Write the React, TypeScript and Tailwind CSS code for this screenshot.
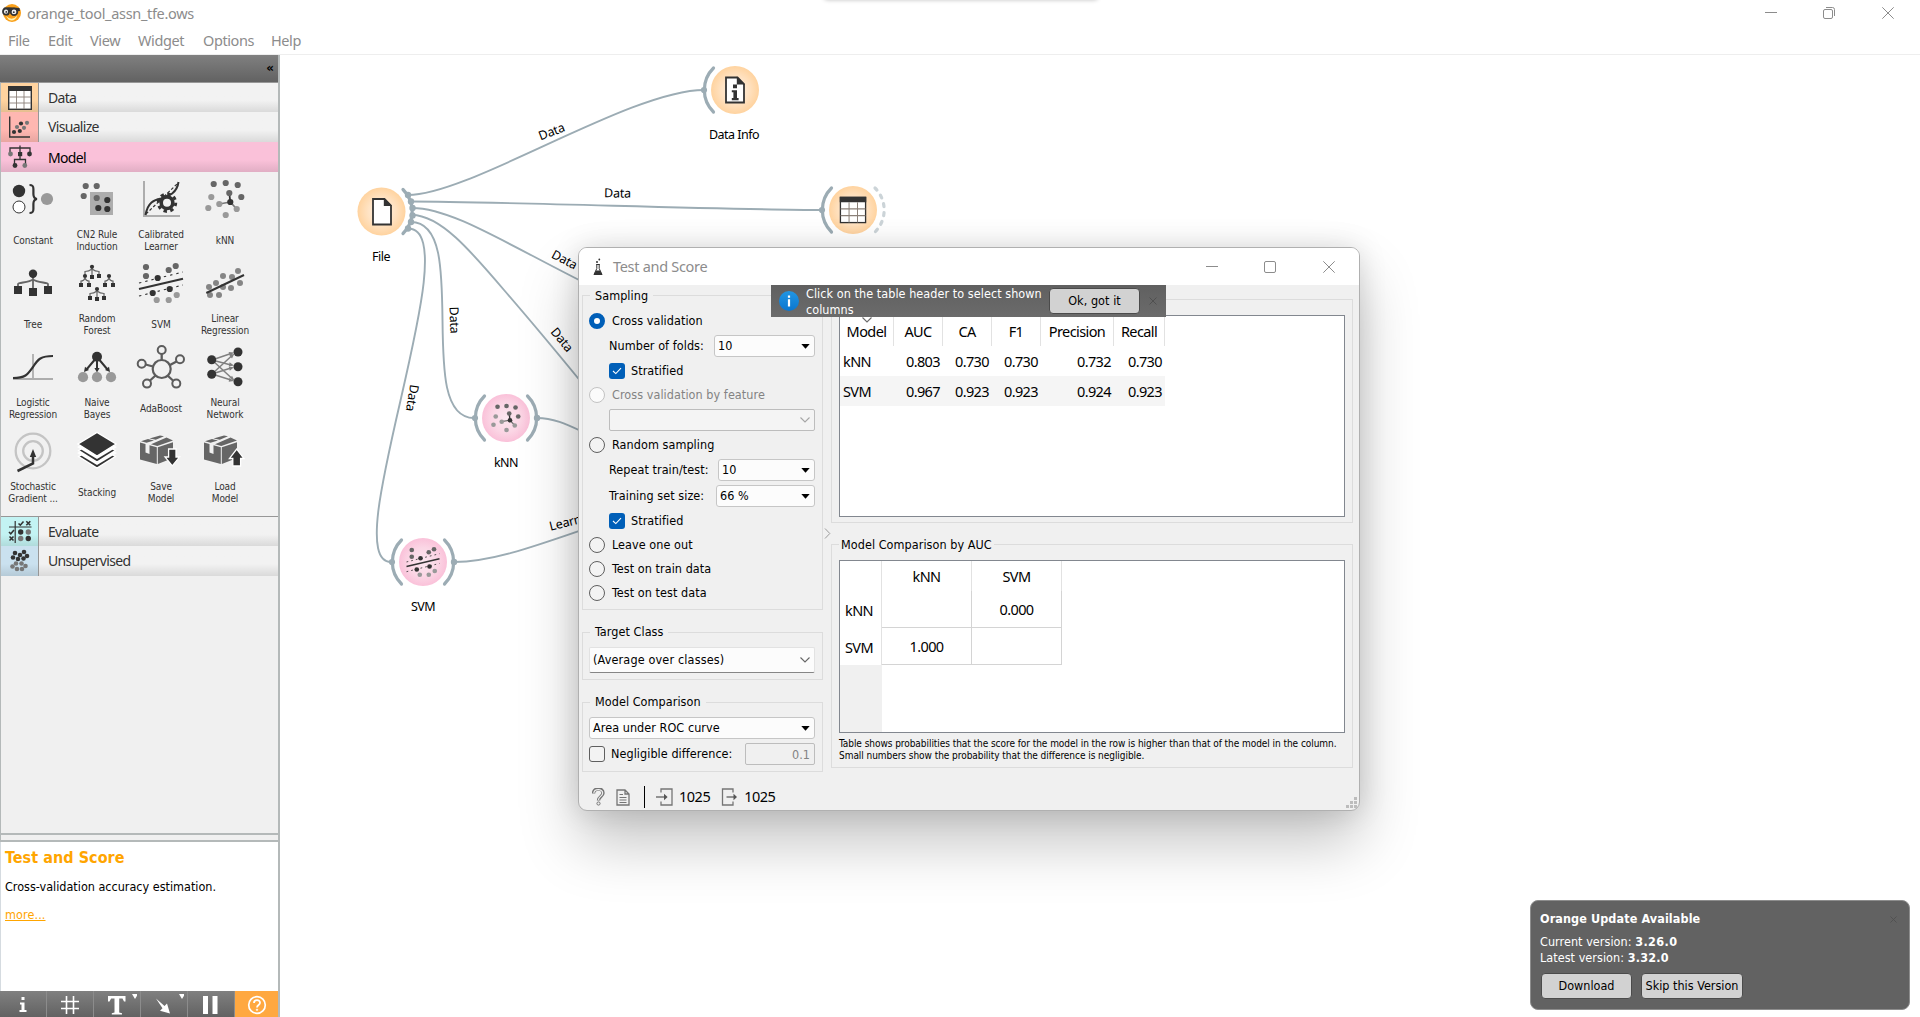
import React from "react";

const SEGOE = "[font-family:'Noto_Sans',sans-serif]";
const TAHOMA = "[font-family:'DejaVu_Sans_Condensed','DejaVu_Sans',sans-serif] font-stretch-condensed";

type Dot = [number, number, string];

const Dots = ({ items, r = 3.1 }: { items: Dot[]; r?: number }) => (
  <>
    {items.map(([x, y, c], i) => (
      <circle key={i} cx={x} cy={y} r={r} fill={c} />
    ))}
  </>
);

const K = "#333333";
const M = "#666666";
const L = "#999999";

const Square = ({ x, y, s }: { x: number; y: number; s: number }) => (
  <rect x={x - s / 2} y={y - s / 2} width={s} height={s} fill={K} />
);

const ConstantArt = () => (
  <g>
    <circle cx="18" cy="19" r="6.2" fill={K} />
    <circle cx="18" cy="35" r="6" fill="#fff" stroke={K} strokeWidth="1" />
    <path d="M28.5 13 C32 13 32.4 14.5 32.4 17 V22 C32.4 25 33 26.6 36 27 C33 27.4 32.4 29 32.4 32 V37 C32.4 39.5 32 41 28.5 41" fill="none" stroke={K} strokeWidth="2.2" />
    <circle cx="46" cy="27" r="6.1" fill={L} />
  </g>
);

const CN2Art = () => (
  <g>
    <rect x="25" y="20" width="23" height="23" fill="#adadad" />
    <Dots items={[[20.7, 14, M], [31.7, 14, M], [18.7, 24, M], [31.7, 26, M], [42.3, 28, K], [33.3, 36, K], [42.3, 37, K]]} />
  </g>
);

const CalibratedArt = () => (
  <g fill="none">
    <path d="M15 9 V44 H51" stroke="#adadad" strokeWidth="2" />
    <path d="M17 42 L48 12" stroke={K} strokeWidth="1.2" strokeDasharray="3 2" />
    <path d="M16.5 43 C19 29 26 28 32 26.5 C40 24 48 21 49.5 10" stroke={K} strokeWidth="2" />
    <circle cx="38" cy="30.7" r="8.7" stroke={K} strokeWidth="3" strokeDasharray="3.4 3.43" />
    <circle cx="38" cy="30.7" r="5.8" fill="#f1f1f1" stroke={K} strokeWidth="3.6" />
  </g>
);

const KnnArt = () => (
  <g>
    <path d="M37.3 30 L26.3 32 M37.3 30 L43.7 37" stroke="#777" strokeWidth="1.7" />
    <path d="M37.3 30 L36.3 21" stroke={K} strokeWidth="1.8" />
    <Dots items={[[20.7, 12, M], [32.7, 11, M], [44.7, 13, M], [36.3, 21, M], [48.3, 25, M], [18.3, 25, L], [15.3, 36, L], [26.3, 32, L], [43.7, 37, L], [32.7, 43, L], [37.3, 30, K]]} />
  </g>
);

const TreeArt = () => (
  <g>
    <path d="M17 31 V28 C17 26.5 28 26.5 32 23.5 C36 26.5 47 26.5 47 28 V31 M32 20 V34" fill="none" stroke={M} strokeWidth="1.8" />
    <circle cx="32" cy="17.8" r="4.2" fill={K} />
    <Square x={17} y={34} s={8} />
    <Square x={32} y={36} s={8} />
    <Square x={47} y={34} s={8} />
  </g>
);

const ForestArt = () => (
  <g>
    <path d="M20 19 V15.5 Q24 15.5 27 13 Q30 15.5 34 15.5 V18 M27 11 V20 M16 28 V25 Q19 25 20 22 Q21 25 24 25 V28 M40 28 V25 Q43 25 44 22 Q45 25 48 25 V28 M25 41 V37.5 Q29 37.5 32 35 Q35 37.5 39 37.5 V41 M32 34 V42" fill="none" stroke={M} strokeWidth="1.2" />
    <Dots r={2.1} items={[[27, 10.8, K], [20, 20, K], [44, 20, K], [32, 33, K]]} />
    {([[27, 21], [34, 20], [16, 29], [24, 29], [40, 29], [48, 29], [25, 42], [32, 43], [39, 42]] as [number, number][]).map(([x, y]) => (
      <Square key={`${x}-${y}`} x={x} y={y} s={4} />
    ))}
  </g>
);

const SvmArt = () => (
  <g>
    <path d="M10 33 L54 22.7" stroke={K} strokeWidth="2" />
    <path d="M10 27 L54 16 M10 40 L54 29" stroke={K} strokeWidth="1.1" strokeDasharray="2.4 4" />
    <Dots items={[[17, 11, M], [17, 20, M], [39.7, 14, M], [46.7, 10, M], [28.7, 22, K], [23.7, 37, K], [40.7, 33, K], [27.7, 44, L], [39.7, 44, L], [47.7, 39, L]]} />
  </g>
);

const LinearArt = () => (
  <g>
    <Dots r={3} items={[[16, 31, "#858585"], [23, 27, "#858585"], [30, 20, "#858585"], [39, 21, "#858585"], [45, 15, "#858585"], [17, 39, "#858585"], [26, 39, "#858585"], [30, 31, "#858585"], [38, 32, "#858585"], [47, 27, "#858585"]]} />
    <path d="M13.3 37 L51 19" stroke={K} strokeWidth="2" />
  </g>
);

const LogisticArt = () => (
  <g fill="none">
    <path d="M32 14 V39 M12 39 H52" stroke="#adadad" strokeWidth="1.8" />
    <path d="M12 38 C25 38 27 34 32 27 C37 19 40 16 52 16" stroke={K} strokeWidth="2.2" />
  </g>
);

const BayesArt = () => (
  <g>
    <path d="M32 17 L21.5 29.5 M32 17 V29 M32 17 L42.5 29.5" stroke={K} strokeWidth="2" />
    <path d="M19 32 L20 26.8 L24 30 Z M32 32.5 L29.4 28 H34.6 Z M45 32 L44 26.8 L40 30 Z" fill={K} />
    <circle cx="32" cy="16.7" r="5" fill={K} />
    <Dots r={5.1} items={[[18, 37.2, L], [32, 37.2, L], [46, 37.2, L]]} />
  </g>
);

const AdaArt = () => (
  <g fill="none" stroke="#5c5c5c">
    <circle cx="32.7" cy="29" r="9" strokeWidth="2.2" />
    <path d="M32.7 20 V14 M41 25 L47.5 21.5 M24 26.5 L16.5 24.5 M26.5 35.5 L20.5 41 M38.5 35.5 L44.5 41" strokeWidth="2.3" />
    <g strokeWidth="2">
      <circle cx="32.7" cy="10" r="4" />
      <circle cx="51" cy="19.3" r="4" />
      <circle cx="12.7" cy="23.7" r="4" />
      <circle cx="18" cy="43.6" r="4" />
      <circle cx="47.3" cy="43.6" r="4" />
    </g>
  </g>
);

const NeuralArt = () => (
  <g>
    <path d="M19 20 L38 13.5 M19 20 L38 25 M19 20 L38.5 38 M19 34 L38.5 16 M19 34 L38 28 M19 34 L38 40" stroke="#808080" strokeWidth="1.5" />
    <path d="M41 12.6 L35.6 12 L37 16 Z M41 25.6 L36.6 22.3 L35.8 26.4 Z M41.5 40.5 L36.7 38.8 L39 35.8 Z M41.5 13.5 L36.3 15.4 L39 18.6 Z M41 27.3 L35.8 26.8 L36.8 30.7 Z M41 41 L36.5 37.6 L35.7 41.7 Z" fill="#808080" />
    <Dots r={4.5} items={[[18.7, 19.7, K], [18.7, 34.3, K], [45, 12, K], [45, 26.7, K], [45, 41.7, K]]} />
  </g>
);

const SgdArt = () => (
  <g fill="none">
    <circle cx="32" cy="27" r="17.3" stroke="#c4c4c4" strokeWidth="2.3" />
    <circle cx="32" cy="27" r="9.8" stroke="#c4c4c4" strokeWidth="2.3" />
    <path d="M16.5 47 L32 39.5 V31" stroke={K} strokeWidth="2.5" />
    <path d="M32 25 L35.2 33 H28.8 Z" fill={K} />
  </g>
);

const StackArt = () => (
  <g stroke="#fff" strokeWidth="1.4">
    <path d="M32 21.5 L50.3 32.5 L32 44.2 L13.7 32.5 Z" fill={K} />
    <path d="M32 18 L52 29 L32 41 L12 29 Z" fill="#fff" stroke="none" />
    <path d="M32 15.5 L50.3 26.5 L32 38.2 L13.7 26.5 Z" fill={K} />
    <path d="M32 12 L52 23 L32 35 L12 23 Z" fill="#fff" stroke="none" />
    <path d="M32 8.3 L51 20 L32 32 L13 20 Z" fill={K} />
  </g>
);

const BoxArt = () => (
  <g fill={M}>
    <path d="M11 18.5 L16.5 20 V28.5 L20.5 30 V21.3 L27.8 23.3 V40 L11 35.5 Z" />
    <path d="M28.8 23.3 L44 18.3 V34 L28.8 40 Z" />
    <path d="M12 17.2 L19 14.9 L25 16.4 L17.5 18.8 Z M20.5 14.4 L31 11.4 L35 12.3 L26.8 15.8 Z M22 20.2 L37.5 13.6 L44 16.4 L28.3 22 Z" />
  </g>
);

const SaveArt = () => (
  <g>
    <BoxArt />
    <path d="M39.6 25 H47 V33 H50.6 L43.3 41.8 L36 33 H39.6 Z" fill={K} stroke="#fff" strokeWidth="1.3" />
  </g>
);

const LoadArt = () => (
  <g>
    <BoxArt />
    <path d="M39.8 42 H47.6 V34.5 H51 L43.7 25 L36.4 34.5 H39.8 Z" fill={K} stroke="#fff" strokeWidth="1.3" />
  </g>
);

const widgets: { label: string[]; art: React.ReactNode }[] = [
  { label: ["Constant"], art: <ConstantArt /> },
  { label: ["CN2 Rule", "Induction"], art: <CN2Art /> },
  { label: ["Calibrated", "Learner"], art: <CalibratedArt /> },
  { label: ["kNN"], art: <KnnArt /> },
  { label: ["Tree"], art: <TreeArt /> },
  { label: ["Random", "Forest"], art: <ForestArt /> },
  { label: ["SVM"], art: <SvmArt /> },
  { label: ["Linear", "Regression"], art: <LinearArt /> },
  { label: ["Logistic", "Regression"], art: <LogisticArt /> },
  { label: ["Naive", "Bayes"], art: <BayesArt /> },
  { label: ["AdaBoost"], art: <AdaArt /> },
  { label: ["Neural", "Network"], art: <NeuralArt /> },
  { label: ["Stochastic", "Gradient ..."], art: <SgdArt /> },
  { label: ["Stacking"], art: <StackArt /> },
  { label: ["Save", "Model"], art: <SaveArt /> },
  { label: ["Load", "Model"], art: <LoadArt /> },
];

const TableArt = ({ size = 24 }: { size?: number }) => (
  <svg width={size} height={size} viewBox="0 0 24 24">
    <rect x="0.7" y="0.7" width="22.6" height="22.6" fill="#fff" stroke={K} strokeWidth="1.4" />
    <path d="M0 0 H24 V5 H0 Z" fill={K} />
    <path d="M8.5 5 V23 M16 5 V23 M1 11 H23 M1 17 H23" stroke="#8a8078" strokeWidth="0.9" />
  </svg>
);

const ScatterArt = () => (
  <svg width="24" height="24" viewBox="0 0 24 24">
    <path d="M1.7 1.5 V22 H22" fill="none" stroke={K} strokeWidth="1.4" />
    <Dots r={2.1} items={[[6, 17, K], [11.8, 16, K], [13, 8.5, K], [9, 12, "#777"], [16, 12.8, "#777"], [19, 7.8, "#777"]]} />
  </svg>
);

const ModelArt = () => (
  <svg width="24" height="24" viewBox="0 0 24 24">
    <path d="M2 8 V3 H22 V8 M12 0.5 V14 M6.5 19 V14.5 H17.5 V19" fill="none" stroke={K} strokeWidth="1.3" />
    <Dots r={2.4} items={[[2.5, 9, "#777"], [21.5, 9, K], [7, 20.5, K], [16.8, 20.5, "#777"]]} />
    <rect x="10" y="7" width="4.2" height="4.2" fill={K} />
  </svg>
);

const EvaluateArt = () => (
  <svg width="24" height="24" viewBox="0 0 24 24">
    <path d="M7.2 1 V23 M1 7 H23.5" stroke={K} strokeWidth="1.2" />
    <path d="M10.5 3.5 L12.3 5.2 L15.5 1.5 M1 12 L2.8 13.8 L6 10 M18.3 1.3 L22.3 5.3 M22.3 1.3 L18.3 5.3 M1.5 16.5 L5.5 20.5 M5.5 16.5 L1.5 20.5" fill="none" stroke={K} strokeWidth="1.6" />
    <Dots r={2.7} items={[[12.7, 12, K], [20.3, 12, "#777"], [12.7, 18.5, "#777"], [20.3, 18.5, K]]} />
  </svg>
);

const UnsupervisedArt = () => (
  <svg width="24" height="24" viewBox="0 0 24 24">
    <Dots r={2.3} items={[[7, 4, K], [12, 6, K], [16, 3, K], [5, 8.5, K], [10, 10, K], [15.5, 9.5, K], [19, 7, K], [8, 14.5, "#777"], [13.5, 14.5, "#777"], [4.5, 17.5, "#777"], [17.5, 17, "#777"], [9, 20, "#777"], [14, 20, "#777"]]} />
  </svg>
);

const Category = ({ name, art, tint, height }: { name: string; art: React.ReactNode; tint: string; height: string }) => (
  <div className={`flex bg-linear-to-b from-[#f2f2f2] from-60% to-[#dadada] ${height}`}>
    <div className={`flex w-[38px] items-center justify-center border-r border-[#979797] ${tint}`}>{art}</div>
    <span className={`pl-[9px] text-[14px] leading-[29px] tracking-[-0.68px] text-[#333] ${SEGOE}`}>{name}</span>
  </div>
);

const Sidebar = () => (
  <aside className="flex w-[280px] flex-none flex-col border-r-2 border-[#b4b9b9] bg-[#f0f0f0]">
    <div className="flex h-[27px] items-center justify-end bg-linear-to-b from-[#808080] to-[#626262] pr-[4px]">
      <span className="mb-[2px] text-[12px] leading-none font-bold text-black [font-family:'DejaVu_Sans',sans-serif]">«</span>
    </div>
    <div className="flex h-[434px] flex-none flex-col border-t border-l border-t-[#979797] border-l-[#b4b9b9] bg-[#f1f1f1]">
      <Category height="h-[29px]" name="Data" tint="bg-linear-to-b from-[#ffd39f] from-60% to-[#e6be90]" art={<TableArt />} />
      <Category height="h-[30px]" name="Visualize" tint="bg-linear-to-b from-[#ffb7b1] from-60% to-[#e8a6a1]" art={<ScatterArt />} />
      <div className="flex h-[30px] items-center bg-linear-to-b from-[#fac1d9] from-60% to-[#e1aec4]">
        <div className="flex w-[38px] justify-center"><ModelArt /></div>
        <span className={`pl-[9px] text-[14px] leading-[29px] tracking-[-0.68px] text-black ${SEGOE}`}>Model</span>
      </div>
      <div className="grid grid-cols-[repeat(4,64px)] grid-rows-[repeat(4,84px)]">
        {widgets.map((w, i) => (
          <div key={i} className="flex flex-col items-center">
            <svg width="64" height="56" viewBox="0 0 64 56">{w.art}</svg>
            <div className={`flex h-[26px] flex-col justify-center text-center text-[10px] leading-[12px] tracking-[-0.1px] text-[#333] ${TAHOMA}`}>
              {w.label.map((l) => (
                <span key={l} className="block whitespace-nowrap">{l}</span>
              ))}
            </div>
          </div>
        ))}
      </div>
    </div>
    <div className="flex flex-1 flex-col border-l border-[#b4b9b9]">
      <div className="border-t border-[#979797]">
        <Category height="h-[29px]" name="Evaluate" tint="bg-linear-to-b from-[#c3f3f3] from-60% to-[#b0dbdb]" art={<EvaluateArt />} />
        <Category height="h-[30px]" name="Unsupervised" tint="bg-linear-to-b from-[#cae1ef] from-60% to-[#b5cad7]" art={<UnsupervisedArt />} />
      </div>
    </div>
    <div className="h-[9px] flex-none border-y-2 border-l border-[#b4b9b9]" />
    <div className={`flex h-[149px] flex-none flex-col border-l border-[#d5dbe0] bg-white pl-[4px] text-[12.5px] ${TAHOMA}`}>
      <h2 className="mt-[6px] text-[16px] leading-[20px] font-bold tracking-[0.05px] text-[#ffa500]">Test and Score</h2>
      <p className="mt-[11px] leading-[16px] text-black">Cross-validation accuracy estimation.</p>
      <a className="mt-[12px] leading-[16px] tracking-[0.1px] text-[#ffa500] underline">more...</a>
    </div>
    <div className="flex h-[26px] flex-none bg-linear-to-b from-[#808080] to-[#626262] text-white">
      {[
        <svg key="i" width="8" height="16" viewBox="0 0 8 16"><path d="M2.5 0 H5.5 V3 H2.5 Z M1 5.5 H5.5 V13 H7.5 V15 H0.5 V13 H2.5 V7.5 H1 Z" fill="#fff" /></svg>,
        <svg key="g" width="18" height="18" viewBox="0 0 18 18"><path d="M5.5 0 V18 M12.5 0 V18 M0 5.5 H18 M0 12.5 H18" stroke="#fff" strokeWidth="1.6" /></svg>,
        <svg key="t" width="40" height="22" viewBox="0 0 40 22"><path d="M11 2 H28.5 V7.5 H27 L25.5 4.5 H22.2 V18.5 L25 19.3 V20.5 H14.8 V19.3 L17.5 18.5 V4.5 H14.1 L12.5 7.5 H11 Z M35 0 H41 L38 5 Z" fill="#fff" /></svg>,
        <svg key="a" width="40" height="22" viewBox="0 0 40 22"><path d="M12 4.5 L20.5 12 L23 9.5 L26 19.5 L16 16.7 L18.5 14.3 Z M35 0 H41 L38 5 Z" fill="#fff" /></svg>,
        <svg key="p" width="16" height="18" viewBox="0 0 16 18"><path d="M0 0 H5 V18 H0 Z M9.5 0 H14.5 V18 H9.5 Z" fill="#fff" /></svg>,
      ].map((g, i) => (
        <div key={i} className="flex w-[47px] items-center justify-center border-r border-[#8c8c8c] pt-px">{g}</div>
      ))}
      <div className="flex flex-1 items-center justify-center bg-[#ffa840] pt-px">
        <svg width="20" height="20" viewBox="0 0 20 20" fill="none" stroke="#fff">
          <circle cx="10" cy="10" r="8.3" strokeWidth="1.7" />
          <path d="M7 8 C7 4.2 13 4.2 13 7.8 C13 10 10 10 10 12.4" strokeWidth="1.8" />
          <circle cx="10" cy="14.8" r="0.8" fill="#fff" strokeWidth="0.6" />
        </svg>
      </div>
    </div>
  </aside>
);

const LINK = "#9cacb4";

const links = [
  "M408 195 C470 195 630 90 704 90",
  "M411 201.5 C500 201.5 730 210 822 210",
  "M412 208 C450 208 500 240 582 281.5",
  "M412 215 C440 215 470 250 504 290 C530 320 555 350 582 383",
  "M411 222 C472 222 413 418 474 418",
  "M408 228.5 C471 228 334 562 391 562",
  "M537 418 C553 418 566 424 582 431.5",
  "M454 562 C490 562 530 548 582 530",
];

const linkLabels: [number, number, number, string][] = [
  [551.5, 131.5, -21, "Data"],
  [617.5, 193, 1, "Data"],
  [564.5, 259.5, 28, "Data"],
  [454.5, 320, 88, "Data"],
  [412.5, 398, 99, "Data"],
  [562, 339.5, 51, "Data"],
  [571, 521, -14, "Learner"],
];

type NodeProps = { x: number; y: number; fill: string; left?: boolean; right?: boolean; dashed?: boolean };

const NodeShape = ({ x, y, fill, left, right, dashed }: NodeProps) => (
  <g transform={`translate(${x} ${y})`} fill="none" stroke={LINK} strokeWidth="3.2" strokeLinecap="round">
    <circle r="24" fill={`url(#${fill})`} stroke="none" />
    {left && <path d="M-21.5 -22 A31 31 0 0 0 -21.5 22" />}
    {left && <circle cx="-31" r="3.1" fill={LINK} stroke="none" />}
    {right && <path d="M21.5 -22 A31 31 0 0 1 21.5 22" />}
    {dashed && <path d="M22 -22 A31 31 0 0 1 22 22" stroke="#ccd4d8" strokeDasharray="3 6" />}
  </g>
);

const Canvas = () => (
  <svg width="1640" height="962" viewBox="280 55 1640 962" className="block">
    <defs>
      <radialGradient id="data"><stop offset="0" stopColor="#fff2e4" /><stop offset="0.55" stopColor="#ffe3c4" /><stop offset="1" stopColor="#ffd39f" /></radialGradient>
      <radialGradient id="model"><stop offset="0" stopColor="#fbe8f0" /><stop offset="0.6" stopColor="#fbd6e5" /><stop offset="1" stopColor="#fac1d9" /></radialGradient>
    </defs>
    {links.map((d) => (
      <path key={d} d={d} fill="none" stroke={LINK} strokeWidth="1.9" />
    ))}
    <NodeShape x={735} y={90} fill="data" left />
    <NodeShape x={381.5} y={211.5} fill="data" right />
    <NodeShape x={853} y={210} fill="data" left dashed />
    <NodeShape x={506} y={418} fill="model" left right />
    <NodeShape x={423} y={562} fill="model" left right />
    <Dots r={3.2} items={[[408, 195, LINK], [411, 201.5, LINK], [412.5, 208, LINK], [412.5, 215.5, LINK], [411, 222, LINK], [408, 228.5, LINK], [537, 418, LINK], [454, 562, LINK]]} />
    <g fill="#fff" stroke={K} strokeWidth="1.8">
      <path d="M373 199 H384.5 L391 205.5 V224.5 H373 Z" />
      <path d="M383.8 198 L392 206 H383.8 Z" fill={K} stroke="none" />
      <path d="M726 77.5 H737.5 L744 84 V102.5 H726 Z" />
      <path d="M736.8 76.5 L745 84.5 H736.8 Z" fill={K} stroke="none" />
      <path d="M733 84.5 H737 V88.2 H733 Z M731.8 90.3 H737 V98 H738.6 V100.2 H731.8 V98 H733.4 V92.3 H731.8 Z" fill={K} stroke="none" />
    </g>
    <g transform="translate(839.5 196.5) scale(1.125)"><TableArt /></g>
    <g transform="translate(482 397.7) scale(0.75)"><KnnArt /></g>
    <g transform="translate(399 541.7) scale(0.75)"><SvmArt /></g>
    <g className={SEGOE} fontSize="12.5" letterSpacing="-0.5" textAnchor="middle" fill="#000">
      <text x="734" y="139">Data Info</text>
      <text x="381" y="261">File</text>
      <text x="506" y="467">kNN</text>
      <text x="423" y="611">SVM</text>
      {linkLabels.map(([x, y, a, t], i) => (
        <text key={i} transform={`translate(${x} ${y}) rotate(${a})`} y="4.5" letterSpacing="-0.2">{t}</text>
      ))}
    </g>
  </svg>
);

const Minimize = () => <svg width="12" height="12" viewBox="0 0 12 12"><path d="M0 5.5 H12" stroke="#8c8c8c" strokeWidth="1" /></svg>;
const Close = () => <svg width="12" height="12" viewBox="0 0 12 12"><path d="M0.3 0.3 L11.7 11.7 M11.7 0.3 L0.3 11.7" stroke="#8c8c8c" strokeWidth="1" /></svg>;

const Radio = ({ label, checked, disabled }: { label: string; checked?: boolean; disabled?: boolean }) => (
  <div className={`flex h-5 items-center gap-[7px] ${disabled ? "text-[#838383]" : "text-black"}`}>
    <span
      className={`size-4 flex-none rounded-full ${checked ? "border-[5px] border-[#005fb8] bg-white" : disabled ? "border border-[#c3c3c3] bg-[#fbfbfb]" : "border border-[#5f5f5f] bg-[#f3f3f3]"}`}
    />
    <span className="pt-px">{label}</span>
  </div>
);

const Stratified = () => (
  <div className="ml-5 flex h-5 items-center gap-[6px]">
    <span className="flex size-4 items-center justify-center rounded-[3px] bg-[#005fb8]">
      <svg width="10" height="8" viewBox="0 0 10 8"><path d="M1 4 L3.8 6.6 L9 1.2" fill="none" stroke="#fff" strokeWidth="1.1" /></svg>
    </span>
    <span className="pt-px">Stratified</span>
  </div>
);

const Combo = ({ value, size }: { value: string; size: string }) => (
  <div className={`flex h-[22px] items-center justify-between rounded-[3px] border border-[#c6c6c6] bg-[#fcfcfc] pr-[4px] pl-[3px] ${size}`}>
    <span className="pt-px">{value}</span>
    <svg width="9" height="5" viewBox="0 0 9 5"><path d="M0.3 0 H8.7 L4.5 4.8 Z" fill="#000" /></svg>
  </div>
);

const Chevron = ({ color }: { color: string }) => (
  <svg width="10" height="6" viewBox="0 0 10 6"><path d="M0.5 0.5 L5 5 L9.5 0.5" fill="none" stroke={color} strokeWidth="1.1" /></svg>
);

const box = "border border-[#dcdcdc]";

const headers: [string, string][] = [
  ["Model", "w-[54px]"],
  ["AUC", "w-[49px]"],
  ["CA", "w-[49px]"],
  ["F1", "w-[49px]"],
  ["Precision", "w-[73px]"],
  ["Recall", "w-[51px]"],
];
const rows = [
  ["kNN", "0.803", "0.730", "0.730", "0.732", "0.730"],
  ["SVM", "0.967", "0.923", "0.923", "0.924", "0.923"],
];

const ScoreTable = () => (
  <div className={`h-[202px] w-[506px] border border-[#82878f] bg-white text-[14.5px] tracking-[-0.6px] ${SEGOE}`}>
    <div className="flex h-[30px]">
      {headers.map(([h, w]) => (
        <div key={h} className={`flex items-center justify-center border-r border-[#e2e2e2] pt-[2px] ${w}`}>{h}</div>
      ))}
    </div>
    {rows.map((r, i) => (
      <div key={i} className={`flex h-[30px] w-[325px] items-center pt-px ${i ? "bg-[#f5f5f5]" : ""}`}>
        {r.map((c, j) => (
          <span key={j} className={`${headers[j][1]} ${j ? "pr-[3px] text-right" : "pl-[3px]"}`}>{c}</span>
        ))}
      </div>
    ))}
  </div>
);

const ComparisonTable = () => (
  <div className={`flex h-[173px] w-[506px] border border-[#82878f] bg-white text-[14.5px] tracking-[-0.6px] ${SEGOE}`}>
    <div className="flex w-[42px] flex-none flex-col bg-[#f0f0f0]">
      <div className="flex h-[104px] flex-col border-r border-[#e2e2e2] bg-white">
        <span className="mt-[30px] pl-[5px] leading-[38px]">kNN</span>
        <span className="pl-[5px] leading-[36px]">SVM</span>
      </div>
    </div>
    <div className="grid h-[104px] grid-cols-[90px_90px] grid-rows-[30px_37px_37px] text-center">
      <span className="border-r border-[#e2e2e2] leading-[31px]">kNN</span>
      <span className="border-r border-[#e2e2e2] leading-[31px]">SVM</span>
      <span className="border-r border-b border-[#d4d4d4]" />
      <span className="border-r border-b border-[#d4d4d4] leading-[37px]">0.000</span>
      <span className="border-r border-b border-[#d4d4d4] leading-[37px]">1.000</span>
      <span className="border-r border-b border-[#d4d4d4]" />
    </div>
  </div>
);

const Dialog = () => (
  <section
    className={`absolute top-[247px] left-[578px] flex h-[564px] w-[782px] flex-col overflow-hidden rounded-[9px] border border-[#b0b0b0] bg-[#f0f0f0] text-[12.5px] tracking-[0.06px] text-black shadow-[0_0_28px_rgba(0,0,0,0.13),0_32px_60px_rgba(0,0,0,0.23)] ${TAHOMA}`}
  >
    <div className="flex h-[37px] flex-none items-center bg-white pl-[14px]">
      <svg width="10" height="18" viewBox="0 0 10 18">
        <path d="M3.2 6.5 H6.8 M3.8 6.5 V10.5 L1 16.5 H9 L6.2 10.5 V6.5" fill="none" stroke={K} strokeWidth="1" />
        <path d="M3 12.5 H7 L9.3 17 H0.7 Z" fill={K} />
        <circle cx="4" cy="4" r="1" fill={K} />
        <circle cx="6.3" cy="1.5" r="0.9" fill={K} />
      </svg>
      <span className={`ml-[10px] text-[14.5px] tracking-[-0.3px] text-[#8c8c8c] ${SEGOE}`}>Test and Score</span>
      <div className="ml-auto flex items-center pr-[24px]">
        <Minimize />
        <span className="mr-[47px] ml-[46px] size-3 rounded-[2px] border border-[#8c8c8c]" />
        <Close />
      </div>
    </div>
    <div className="flex h-[488px] flex-none">
      <div className="flex w-[244px] flex-col pt-[2px] pl-[3px]">
        <fieldset className={`h-[323px] pr-[7px] pl-[6px] ${box}`}>
          <legend className="ml-px h-4 px-[5px] pt-px leading-4">Sampling</legend>
          <div className="flex flex-col gap-1 pt-2">
            <Radio label="Cross validation" checked />
            <div className="flex items-center justify-between pl-5"><span className="pt-px">Number of folds:</span><Combo value="10" size="w-[101px]" /></div>
            <Stratified />
            <Radio label="Cross validation by feature" disabled />
            <div className="ml-5 flex h-[22px] items-center justify-end rounded-[2px] border border-[#bdbdbd] bg-[#f4f4f4] pr-[4px]"><Chevron color="#a5a5a5" /></div>
            <Radio label="Random sampling" />
            <div className="flex items-center justify-between pl-5"><span className="pt-px">Repeat train/test:</span><Combo value="10" size="w-[97px]" /></div>
            <div className="flex items-center justify-between pl-5"><span className="pt-px">Training set size:</span><Combo value="66 %" size="w-[99px]" /></div>
            <Stratified />
            <Radio label="Leave one out" />
            <Radio label="Test on train data" />
            <Radio label="Test on test data" />
          </div>
        </fieldset>
        <fieldset className={`mt-[14px] h-[56px] pr-[7px] pl-[6px] ${box}`}>
          <legend className="ml-px h-4 px-[5px] leading-4">Target Class</legend>
          <div className="mt-[7px] flex h-[26px] items-center justify-between rounded-[2px] border border-[#e2e2e2] border-b-[#868686] bg-[#fcfcfc] pr-[4px] pl-[3px]">
            <span className="pt-px tracking-[0.16px]">(Average over classes)</span>
            <Chevron color="#666" />
          </div>
        </fieldset>
        <fieldset className={`mt-[14px] h-[78px] pr-[7px] pl-[6px] ${box}`}>
          <legend className="ml-px h-4 px-[5px] leading-4">Model Comparison</legend>
          <div className="flex flex-col gap-1 pt-[7px]">
            <Combo value="Area under ROC curve" size="w-full" />
            <div className="flex items-center">
              <span className="size-4 rounded-[3px] border border-[#5f5f5f] bg-[#f3f3f3]" />
              <span className="ml-[6px] pt-px">Negligible difference:</span>
              <span className="ml-auto h-[22px] w-[70px] rounded-[2px] border border-[#bdbdbd] pr-[4px] text-right leading-[22px] text-[#838383]">0.1</span>
            </div>
          </div>
        </fieldset>
      </div>
      <div className="flex w-[8px] flex-none items-center justify-center">
        <svg width="7" height="11" viewBox="0 0 7 11" className="mt-[8px]"><path d="M1 0.5 L5.8 5.5 L1 10.5" fill="none" stroke="#9a9a9a" strokeWidth="1" /></svg>
      </div>
      <div className="flex w-[522px] flex-none flex-col pt-[14px]">
        <div className={`h-[224px] pt-[15px] pl-[7px] ${box}`}><ScoreTable /></div>
        <fieldset className={`mt-[13px] h-[232px] pl-[7px] ${box}`}>
          <legend className="h-4 px-[2px] pt-px leading-4">Model Comparison by AUC</legend>
          <div className="pt-2"><ComparisonTable /></div>
          <p className="pt-[5px] text-[10px] leading-[12px] tracking-[-0.05px] whitespace-nowrap">
            Table shows probabilities that the score for the model in the row is higher than that of the model in the column.
            <br />
            Small numbers show the probability that the difference is negligible.
          </p>
        </fieldset>
      </div>
    </div>
    <div className={`flex flex-1 items-center pt-[11px] pl-[13px] text-[14.5px] tracking-[-0.5px] ${SEGOE}`}>
      <svg width="13" height="18" viewBox="0 0 13 18" fill="none">
        <path d="M1.5 5.5 C1.5 -0.5 11 -0.5 11 5 C11 8.5 6.5 8.5 6.5 12.5" stroke="#757575" strokeWidth="3.4" />
        <path d="M1.8 5.2 C2 0.4 10.7 0.4 10.7 5 C10.7 8.3 6.5 8.5 6.5 12" stroke="#eee" strokeWidth="1.2" />
        <circle cx="6.5" cy="15.5" r="1.6" stroke="#757575" fill="#eee" />
      </svg>
      <svg width="14" height="17" viewBox="0 0 14 17" fill="none" stroke="#757575" className="ml-[11px]">
        <path d="M1 1 H9 L13 5 V16 H1 Z M9 1 V5 H13" strokeWidth="1.3" />
        <path d="M3.5 5.5 H7 M3.5 8.5 H10.5 M3.5 11 H10.5 M3.5 13.5 H10.5" strokeWidth="1" />
      </svg>
      <span className="ml-[14px] h-[22px] w-px bg-black" />
      <svg width="17" height="18" viewBox="0 0 17 18" fill="none" stroke="#757575" className="ml-[11px]">
        <path d="M5 4.5 V1 H16 V17 H5 V13.5" strokeWidth="1.3" /><path d="M0 9 H10" strokeWidth="1.6" /><path d="M8 5.8 L11.6 9 L8 12.2 Z" fill="#555" stroke="none" />
      </svg>
      <span className="ml-[6px]">1025</span>
      <svg width="17" height="18" viewBox="0 0 17 18" fill="none" stroke="#757575" className="ml-[11px]">
        <path d="M12 4.5 V1 H1.5 V17 H12 V13.5" strokeWidth="1.3" /><path d="M5.5 9 H14" strokeWidth="1.6" /><path d="M12.5 5.8 L16 9 L12.5 12.2 Z" fill="#555" stroke="none" />
      </svg>
      <span className="ml-[6px]">1025</span>
      <svg width="11" height="11" viewBox="0 0 11 11" className="mt-[11px] mr-[2px] ml-auto"><path d="M0 8 H3 V11 H0 Z M4 8 H7 V11 H4 Z M8 8 H11 V11 H8 Z M4 4 H7 V7 H4 Z M8 4 H11 V7 H8 Z M8 0 H11 V3 H8 Z" fill="#bcbcbc" /></svg>
    </div>
    <div className="absolute top-[37px] left-[192px] flex h-8 w-[395px] items-center bg-linear-to-b from-[#606060] to-[#6b6b6b] text-white">
      <span className="ml-2 flex size-5 items-center justify-center rounded-full bg-linear-to-b from-[#2196e3] to-[#0a76d0]">
        <svg width="4" height="12" viewBox="0 0 4 12"><path d="M0.9 0.6 H3.1 V2.8 H0.9 Z M0.9 4.2 H3.1 V11.6 H0.9 Z" fill="#fff" /></svg>
      </span>
      <p className="ml-[7px] w-[243px] pt-px leading-4">Click on the table header to select shown columns</p>
      <button className="h-[26px] w-[91px] rounded-[4px] border border-[#4b4b4b] bg-[#d2d2d2] pt-px text-black">Ok, got it</button>
      <svg width="8" height="8" viewBox="0 0 8 8" className="ml-[9px]"><path d="M0.5 0.5 L7.5 7.5 M7.5 0.5 L0.5 7.5" stroke="#505050" strokeWidth="1" /></svg>
    </div>
    <div className="absolute top-[69px] left-[283px]"><Chevron color="#6a6a6a" /></div>
  </section>
);

const Notice = () => (
  <section className={`absolute top-[900px] left-[1530px] flex h-[110px] w-[380px] flex-col rounded-[8px] border border-[#8d8d8d] bg-[#626262] pl-[9px] text-[12.5px] text-white ${TAHOMA}`}>
    <div className="mt-[10px] flex items-center justify-between pr-[12px]">
      <b className="leading-4 tracking-[0.1px]">Orange Update Available</b>
      <svg width="7" height="7" viewBox="0 0 8 8"><path d="M0.5 0.5 L7.5 7.5 M7.5 0.5 L0.5 7.5" stroke="#505050" /></svg>
    </div>
    <p className="mt-[7px] leading-4 tracking-[0.05px]">Current version: <b className="tracking-[0.4px]">3.26.0</b></p>
    <p className="leading-4 tracking-[0.05px]">Latest version: <b className="tracking-[0.2px]">3.32.0</b></p>
    <div className="mt-[7px] ml-px flex gap-[9px] text-black">
      <button className="h-[26px] w-[91px] rounded-[4px] border border-[#4b4b4b] bg-[#d2d2d2] pt-px">Download</button>
      <button className="h-[26px] w-[102px] rounded-[4px] border border-[#4b4b4b] bg-[#d2d2d2] pt-px whitespace-nowrap">Skip this Version</button>
    </div>
  </section>
);

export default function App() {
  return (
    <main className="relative flex h-[1017px] w-[1920px] flex-col overflow-hidden bg-white">
      <header className={`flex h-[55px] flex-none flex-col border-b border-[#eeeeee] text-[14.5px] tracking-[-0.4px] text-[#8c8c8c] ${SEGOE}`}>
        <div className="flex h-[29px] items-center pl-[2px]">
          <svg width="20" height="20" viewBox="0 0 20 20">
            <circle cx="10" cy="10" r="9" fill="#f9a01b" />
            <path d="M4 13 Q10 18.5 15.5 12.5 Q12 20 6.5 16.5 Z" fill="#fff3b0" />
            <path d="M2 4.5 Q9 4 17.5 5 L18 8 L8 9 L1 7 Z" fill={K} />
            <circle cx="4" cy="8.7" r="3" fill="#eee" stroke={K} strokeWidth="1.8" />
            <circle cx="12" cy="8.9" r="3.3" fill="#eee" stroke={K} strokeWidth="1.8" />
            <circle cx="4.3" cy="8.9" r="0.9" fill={K} /><circle cx="11.8" cy="9.2" r="0.9" fill={K} />
          </svg>
          <span className="ml-[5px] pt-px tracking-[-0.32px]">orange_tool_assn_tfe.ows</span>
          <div className="ml-auto flex items-center pr-[26px]">
            <Minimize />
            <svg width="12" height="12" viewBox="0 0 12 12" fill="none" stroke="#8c8c8c" className="mr-[47px] ml-[46px]"><rect x="0.5" y="2.5" width="9" height="9" rx="1.5" /><path d="M3 0.5 H9.5 Q11.5 0.5 11.5 2.5 V9" /></svg>
            <Close />
          </div>
        </div>
        <nav className="flex items-center pt-px pl-[8px] leading-[27px]">
          {[["File", "w-[40px]"], ["Edit", "w-[42px]"], ["View", "w-[48px]"], ["Widget", "w-[65px]"], ["Options", "w-[68px]"], ["Help", "w-[40px]"]].map(([m, w]) => (
            <span key={m} className={w}>{m}</span>
          ))}
        </nav>
      </header>
      <div className="flex flex-1">
        <Sidebar />
        <Canvas />
      </div>
      <div className="absolute -top-[8px] left-[824px] h-2 w-[274px] rounded-full shadow-[0_0_4px_rgba(0,0,0,0.25)]" />
      <Dialog />
      <Notice />
    </main>
  );
}
